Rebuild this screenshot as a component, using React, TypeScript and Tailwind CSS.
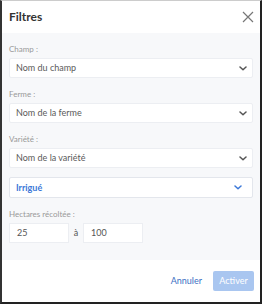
import React from "react";

function Chevron({ className = "" }: { className?: string }) {
  return (
    <svg width="8" height="5" viewBox="0 0 8 5" className={className} fill="none">
      <path d="M1 1l3 2.8L7 1" stroke="currentColor" strokeWidth="1.5" strokeLinecap="round" strokeLinejoin="round" />
    </svg>
  );
}

function Select({ label }: { label: string }) {
  return (
    <div className="h-[20px] bg-white border border-[#eceef2] rounded-[2px] flex items-center justify-between pl-[6px] pr-[5px]">
      <span className="text-[9px] text-[#5a5a5a]">{label}</span>
      <Chevron className="text-[#555]" />
    </div>
  );
}

export default function App() {
  return (
    <div
      className="w-[262px] h-[304px] bg-white border-l-[2px] border-r-[2px] border-b-[2px] border-t border-l-[#333] border-r-[#222] border-b-[#222] border-t-[#ccc] flex flex-col"
      style={{ fontFamily: "Lato, 'Open Sans', sans-serif" }}
    >
      <div className="h-[32px] flex items-center justify-between pl-[7px] pr-[6px] shrink-0">
        <span className="text-[12px] font-bold text-[#333]">Filtres</span>
        <svg width="12" height="12" viewBox="0 0 12 12">
          <path d="M1 1l10 10M11 1L1 11" stroke="#777" strokeWidth="1.2" />
        </svg>
      </div>
      <div className="h-[227px] bg-[#f7f8fa] px-[7px] pt-[10px] flex flex-col shrink-0">
        <div className="text-[8px] text-[#999] h-[15px]">Champ :</div>
        <Select label="Nom du champ" />
        <div className="text-[8px] text-[#999] h-[15px] mt-[10px]">Ferme :</div>
        <Select label="Nom de la ferme" />
        <div className="text-[8px] text-[#999] h-[15px] mt-[10px]">Variété :</div>
        <Select label="Nom de la variété" />
        <div className="h-[21px] mt-[9px] bg-white border border-[#e3e6ec] rounded-[2px] flex items-center justify-between pl-[6px] pr-[10px]">
          <span className="text-[9px] font-bold text-[#3b78d8]">Irrigué</span>
          <Chevron className="text-[#3b78d8]" />
        </div>
        <div className="text-[8px] text-[#999] h-[15px] mt-[10px]">Hectares récoltée :</div>
        <div className="flex items-center">
          <div className="w-[60px] h-[20px] bg-white border border-[#eceef2] flex items-center pl-[7px] text-[9px] text-[#555]">25</div>
          <span className="w-[14px] text-center text-[9px] text-[#555]">à</span>
          <div className="w-[60px] h-[20px] bg-white border border-[#eceef2] flex items-center pl-[7px] text-[9px] text-[#555]">100</div>
        </div>
      </div>
      <div className="flex-1 flex items-center justify-end pr-[6px] gap-[11px]">
        <span className="text-[9px] text-[#3b6fc4]">Annuler</span>
        <div className="w-[41px] h-[20px] rounded-[2px] bg-[#a9c6f0] flex items-center justify-center text-[9px] text-white">Activer</div>
      </div>
    </div>
  );
}
